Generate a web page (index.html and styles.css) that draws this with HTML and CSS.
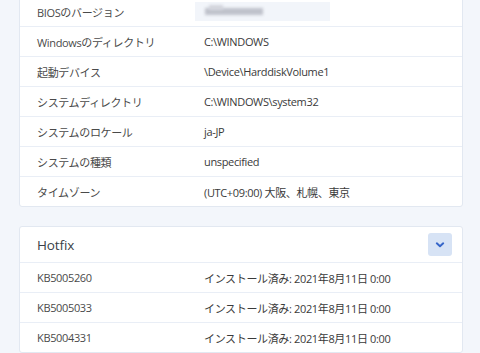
FILE: index.html
```html
<!DOCTYPE html>
<html lang="ja">
<head>
<meta charset="utf-8">
<link rel="stylesheet" href="styles.css">
</head>
<body>
<div class="page">
  <div class="card first">
    <div class="row"><div class="label">BIOSのバージョン</div><div class="value"><span class="blurred"><span class="blur-text"></span><span class="blur-text b2"></span></span></div></div>
    <div class="row"><div class="label">Windowsのディレクトリ</div><div class="value">C:\WINDOWS</div></div>
    <div class="row"><div class="label">起動デバイス</div><div class="value">\Device\HarddiskVolume1</div></div>
    <div class="row"><div class="label">システムディレクトリ</div><div class="value">C:\WINDOWS\system32</div></div>
    <div class="row"><div class="label">システムのロケール</div><div class="value">ja-JP</div></div>
    <div class="row"><div class="label">システムの種類</div><div class="value">unspecified</div></div>
    <div class="row"><div class="label">タイムゾーン</div><div class="value">(UTC+09:00) 大阪、札幌、東京</div></div>
  </div>
  <div class="card second">
    <div class="card-header">
      <div class="title">Hotfix</div>
      <button class="toggle" type="button"><svg width="10" height="6" viewBox="0 0 10 6"><path d="M1.8 1.3 L5 4.3 L8.2 1.3" fill="none" stroke="#3565c9" stroke-width="1.9" stroke-linecap="round" stroke-linejoin="round"/></svg></button>
    </div>
    <div class="row"><div class="label">KB5005260</div><div class="value">インストール済み: 2021年8月11日 0:00</div></div>
    <div class="row"><div class="label">KB5005033</div><div class="value">インストール済み: 2021年8月11日 0:00</div></div>
    <div class="row"><div class="label">KB5004331</div><div class="value">インストール済み: 2021年8月11日 0:00</div></div>
  </div>
</div>
</body>
</html>
```

FILE: styles.css
```css
html, body {
  margin: 0;
  padding: 0;
  background: #f3f6fb;
  height: 100%;
  overflow: hidden;
}
body {
  font-family: "Open Sans", "Noto Sans CJK JP", sans-serif;
  font-size: 11px;
  letter-spacing: -0.35px;
  color: #3a3a3a;
}
.page {
  padding: 0 17px 0 19px;
}
.card {
  background: #fff;
  border: 1px solid #e2e8f1;
  border-radius: 3px;
}
.card.first {
  margin-top: -4px;
}
.card.second {
  margin-top: 19px;
}
.row {
  display: grid;
  grid-template-columns: 167px 1fr;
  align-items: center;
  height: 29px;
  padding-left: 17px;
  border-top: 1px solid #e9eef6;
}
.card.first .row:first-child {
  border-top: none;
}
.label {
  color: #4a4a4a;
  white-space: nowrap;
}
.value {
  color: #3a3a3a;
  white-space: nowrap;
}
.blurred {
  display: inline-block;
  width: 135px;
  height: 19px;
  margin-left: -9px;
  background: #f2f5fa;
  position: relative;
  vertical-align: middle;
}
.blur-text {
  position: absolute;
  left: 10px;
  top: 6px;
  width: 58px;
  height: 7px;
  background: #bfc2cb;
  filter: blur(1.5px);
}
.blur-text.b2 {
  left: 14px;
  top: 3px;
  width: 14px;
  height: 5px;
  background: #d3d5dc;
}
.card-header {
  display: flex;
  align-items: center;
  justify-content: space-between;
  height: 35px;
  padding: 0 10px 0 17px;
}
.title {
  font-size: 13.5px;
  letter-spacing: -0.1px;
  color: #3a3f48;
}
.toggle {
  width: 24px;
  height: 23px;
  border: none;
  border-radius: 3px;
  background: #d7e3f5;
  padding: 0;
  display: flex;
  align-items: center;
  justify-content: center;
}
```
